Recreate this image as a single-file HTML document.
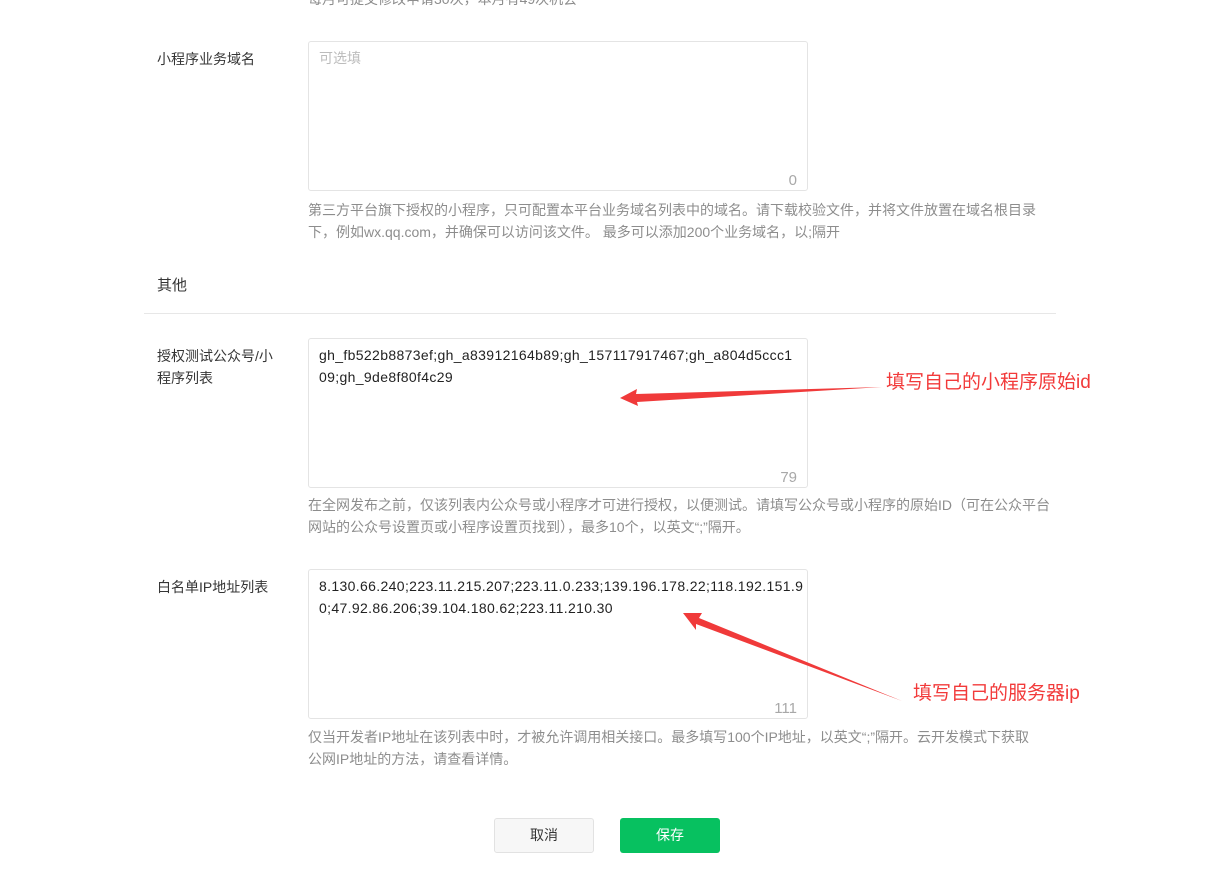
<!DOCTYPE html>
<html><head><meta charset="utf-8"><style>
body{margin:0;width:1212px;height:874px;background:#fff;position:relative;overflow:hidden;font-family:"Liberation Sans","Noto Sans CJK SC",sans-serif;font-size:14px;color:#353535}
.a{position:absolute}
.lbl{position:absolute;left:157px;font-size:14px;line-height:22px;color:#353535;width:125px}
.ta{position:absolute;left:308px;width:500px;height:150px;border:1px solid #e4e4e4;border-radius:3px;box-sizing:border-box}
.ta .t{position:absolute;left:10px;top:5px;right:4px;line-height:22px;font-size:14px;color:#222;white-space:nowrap;letter-spacing:0.35px}
.ta .c{position:absolute;right:10px;bottom:1px;color:#a8a8a8;font-size:15px}
.help{position:absolute;left:308px;width:750px;color:#8d8d8d;font-size:14px;line-height:22px}
.btn{position:absolute;top:818px;width:100px;height:35px;border-radius:3px;box-sizing:border-box;text-align:center;line-height:33px;font-size:14px}
.red{position:absolute;color:#f23a3a;font-size:19px}
</style></head><body>
<div class="help" style="top:-12px">每月可提交修改申请30次，本月有49次机会</div>

<div class="lbl" style="top:48px">小程序业务域名</div>
<div class="ta" style="top:41px"><div class="t" style="color:#bcbcbc;letter-spacing:0">可选填</div><div class="c">0</div></div>
<div class="help" style="top:199px">第三方平台旗下授权的小程序，只可配置本平台业务域名列表中的域名。请下载校验文件，并将文件放置在域名根目录<br>下，例如wx.qq.com，并确保可以访问该文件。 最多可以添加200个业务域名，以;隔开</div>

<div class="a" style="left:157px;top:275px;font-size:15px;line-height:22px;color:#353535">其他</div>
<div class="a" style="left:144px;top:313px;width:912px;height:1px;background:#e7e7e7"></div>

<div class="lbl" style="top:345px">授权测试公众号/小程序列表</div>
<div class="ta" style="top:338px"><div class="t">gh_fb522b8873ef;gh_a83912164b89;gh_157117917467;gh_a804d5ccc1<br>09;gh_9de8f80f4c29</div><div class="c">79</div></div>
<div class="help" style="top:494px">在全网发布之前，仅该列表内公众号或小程序才可进行授权，以便测试。请填写公众号或小程序的原始ID（可在公众平台<br>网站的公众号设置页或小程序设置页找到），最多10个，以英文“;”隔开。</div>

<div class="lbl" style="top:576px">白名单IP地址列表</div>
<div class="ta" style="top:569px"><div class="t">8.130.66.240;223.11.215.207;223.11.0.233;139.196.178.22;118.192.151.9<br>0;47.92.86.206;39.104.180.62;223.11.210.30</div><div class="c">111</div></div>
<div class="help" style="top:726px">仅当开发者IP地址在该列表中时，才被允许调用相关接口。最多填写100个IP地址，以英文“;”隔开。云开发模式下获取<br>公网IP地址的方法，请查看详情。</div>

<div class="btn" style="left:494px;background:#f7f7f7;border:1px solid #e2e2e2;color:#353535">取消</div>
<div class="btn" style="left:620px;background:#07c160;color:#fff;line-height:35px">保存</div>

<div class="red" style="left:886px;top:367px">填写自己的小程序原始id</div>
<div class="red" style="left:913px;top:678px">填写自己的服务器ip</div>
<svg class="a" style="left:0;top:0" width="1212" height="874">
<polygon points="620,398 637,389 636,394 882,387 637,402 638,406" fill="#f03a3a"/>
<polygon points="683,613 702,613 699,618 902,701 696,624 696,630" fill="#f03a3a"/>
</svg>
</body></html>
